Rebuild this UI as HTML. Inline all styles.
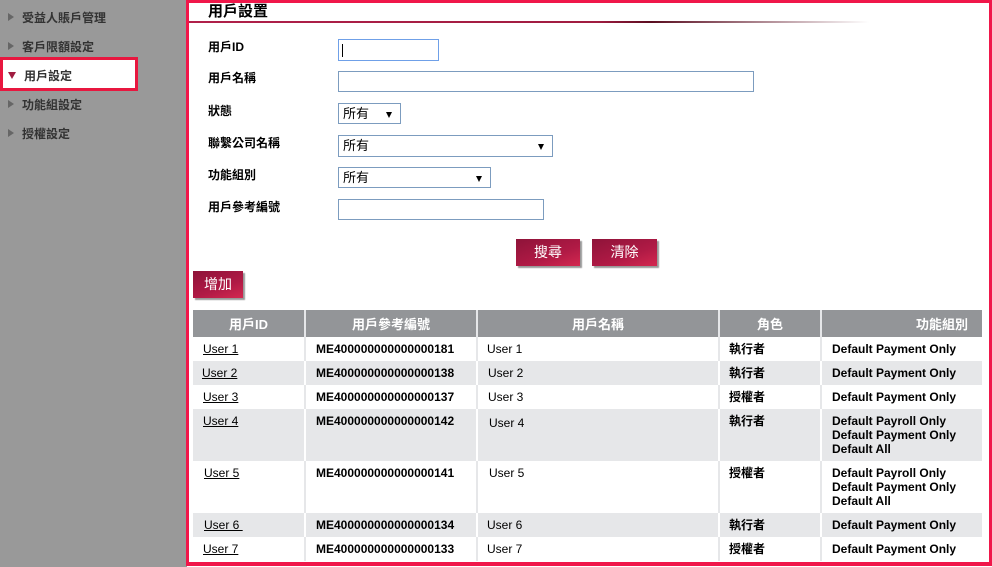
<!DOCTYPE html>
<html><head><meta charset="utf-8"><style>
*{margin:0;padding:0;box-sizing:border-box}
body{width:992px;height:567px;overflow:hidden;background:#fff;font-family:"Liberation Sans","Noto Sans CJK TC",sans-serif;font-size:12px;color:#000;position:relative}
.side{position:absolute;left:0;top:0;width:187px;height:567px;background:#999}
.mi{position:absolute;left:8px;font-size:12px;font-weight:bold;color:#333}
.mi span{display:inline-block;width:0;height:0;border-left:6px solid #666;border-top:4px solid transparent;border-bottom:4px solid transparent;margin-right:8px;vertical-align:1px}
.sel{position:absolute;left:0;top:57px;width:138px;height:34px;background:#fff;border:3px solid #e8173f}
.main{position:absolute;left:186px;top:0;width:806px;height:566px;border:3px solid #f0174a;border-bottom-width:4px}
.ab{position:absolute}
.lbl{position:absolute;left:208px;font-weight:bold;font-size:12px}
.inp{position:absolute;border:1px solid #7c9cbf;background:#fff;height:22px}
.sl{position:absolute;border:1px solid #7c9cbf;background:#fff;height:22px;font-size:13px;padding:0 0 0 4px;line-height:20px}
.sl i{position:absolute;right:8px;top:8px;border-top:6px solid #000;border-left:3px solid transparent;border-right:3px solid transparent}
.btn{position:absolute;height:27px;color:#fff;font-size:14px;text-align:center;line-height:26px;background:linear-gradient(160deg,#8e1339 0%,#b01a45 60%,#d42850 100%);box-shadow:2px 2px 1px #999}
table{position:absolute;left:193px;top:310px;width:789px;border-collapse:collapse;table-layout:fixed}
th{background:#939598;color:#fff;height:27px;font-size:13px;border-right:2px solid #e6e7e9}
td{font-size:12px;vertical-align:top;padding-top:5px;border-right:2px solid #e6e7e9;line-height:14px;font-weight:bold}
tr.g td{background:#e6e7e9;border-right-color:#fff}
td.n{font-weight:normal}
td u{font-weight:normal}
</style></head><body>
<div class="side">
<div class="mi" style="top:9px"><span></span>受益人賬戶管理</div>
<div class="mi" style="top:38px"><span></span>客戶限額設定</div>
<div class="sel"></div>
<div class="mi" style="top:67px;color:#333"><span style="border-left:4px solid transparent;border-right:4px solid transparent;border-top:7px solid #a01c40;border-bottom:0;width:0;vertical-align:1px"></span>用戶設定</div>
<div class="mi" style="top:96px"><span></span>功能組設定</div>
<div class="mi" style="top:125px"><span></span>授權設定</div>
</div>
<div class="main"></div>
<div class="ab" style="left:208px;top:0;font-size:15px;font-weight:bold">用戶設置</div>
<div class="ab" style="left:189px;top:21px;width:680px;height:2px;background:linear-gradient(90deg,#b0204a 0%,#a01c40 60%,#5a0d20 68%,rgba(255,255,255,0) 100%)"></div>
<div class="lbl" style="top:38px">用戶ID</div>
<div class="lbl" style="top:69px">用戶名稱</div>
<div class="lbl" style="top:102px">狀態</div>
<div class="lbl" style="top:134px">聯繫公司名稱</div>
<div class="lbl" style="top:166px">功能組別</div>
<div class="lbl" style="top:198px">用戶參考編號</div>
<div class="inp" style="left:338px;top:39px;width:101px;border-color:#6fa0e8"><div style="position:absolute;left:3px;top:4px;width:1px;height:13px;background:#000"></div></div>
<div class="inp" style="left:338px;top:71px;width:416px;height:21px"></div>
<div class="sl" style="left:338px;top:103px;width:63px;height:21px">所有<i></i></div>
<div class="sl" style="left:338px;top:135px;width:215px">所有<i></i></div>
<div class="sl" style="left:338px;top:167px;width:153px;height:21px">所有<i></i></div>
<div class="inp" style="left:338px;top:199px;width:206px;height:21px"></div>
<div class="btn" style="left:516px;top:239px;width:64px">搜尋</div>
<div class="btn" style="left:592px;top:239px;width:65px">清除</div>
<div class="btn" style="left:193px;top:271px;width:50px">增加</div>
<table>
<colgroup><col style="width:112px"><col style="width:172px"><col style="width:242px"><col style="width:102px"><col style="width:161px"></colgroup>
<tr><th>用戶ID</th><th>用戶參考編號</th><th>用戶名稱</th><th>角色</th><th style="text-align:right;padding-right:14px;border-right:0">功能組別</th></tr>
<tr style="height:24px"><td style="padding-left:10px"><u>User 1</u></td><td style="padding-left:10px">ME400000000000000181</td><td class="n" style="padding-left:9px">User 1</td><td style="padding-left:9px">執行者</td><td style="padding-left:10px;border-right:0">Default Payment Only</td></tr>
<tr class="g" style="height:24px"><td style="padding-left:9px"><u>User 2</u></td><td style="padding-left:10px">ME400000000000000138</td><td class="n" style="padding-left:10px">User 2</td><td style="padding-left:9px">執行者</td><td style="padding-left:10px;border-right:0">Default Payment Only</td></tr>
<tr style="height:24px"><td style="padding-left:10px"><u>User 3</u></td><td style="padding-left:10px">ME400000000000000137</td><td class="n" style="padding-left:10px">User 3</td><td style="padding-left:9px">授權者</td><td style="padding-left:10px;border-right:0">Default Payment Only</td></tr>
<tr class="g" style="height:52px"><td style="padding-left:10px"><u>User 4</u></td><td style="padding-left:10px">ME400000000000000142</td><td class="n" style="padding-left:11px;padding-top:7px">User 4</td><td style="padding-left:9px">執行者</td><td style="padding-left:10px;border-right:0">Default Payroll Only<br>Default Payment Only<br>Default All</td></tr>
<tr style="height:52px"><td style="padding-left:11px"><u>User 5</u></td><td style="padding-left:10px">ME400000000000000141</td><td class="n" style="padding-left:11px">User 5</td><td style="padding-left:9px">授權者</td><td style="padding-left:10px;border-right:0">Default Payroll Only<br>Default Payment Only<br>Default All</td></tr>
<tr class="g" style="height:24px"><td style="padding-left:11px"><u>User 6&nbsp;</u></td><td style="padding-left:10px">ME400000000000000134</td><td class="n" style="padding-left:9px">User 6</td><td style="padding-left:9px">執行者</td><td style="padding-left:10px;border-right:0">Default Payment Only</td></tr>
<tr style="height:24px"><td style="padding-left:10px"><u>User 7</u></td><td style="padding-left:10px">ME400000000000000133</td><td class="n" style="padding-left:9px">User 7</td><td style="padding-left:9px">授權者</td><td style="padding-left:10px;border-right:0">Default Payment Only</td></tr>
</table>
</body></html>
